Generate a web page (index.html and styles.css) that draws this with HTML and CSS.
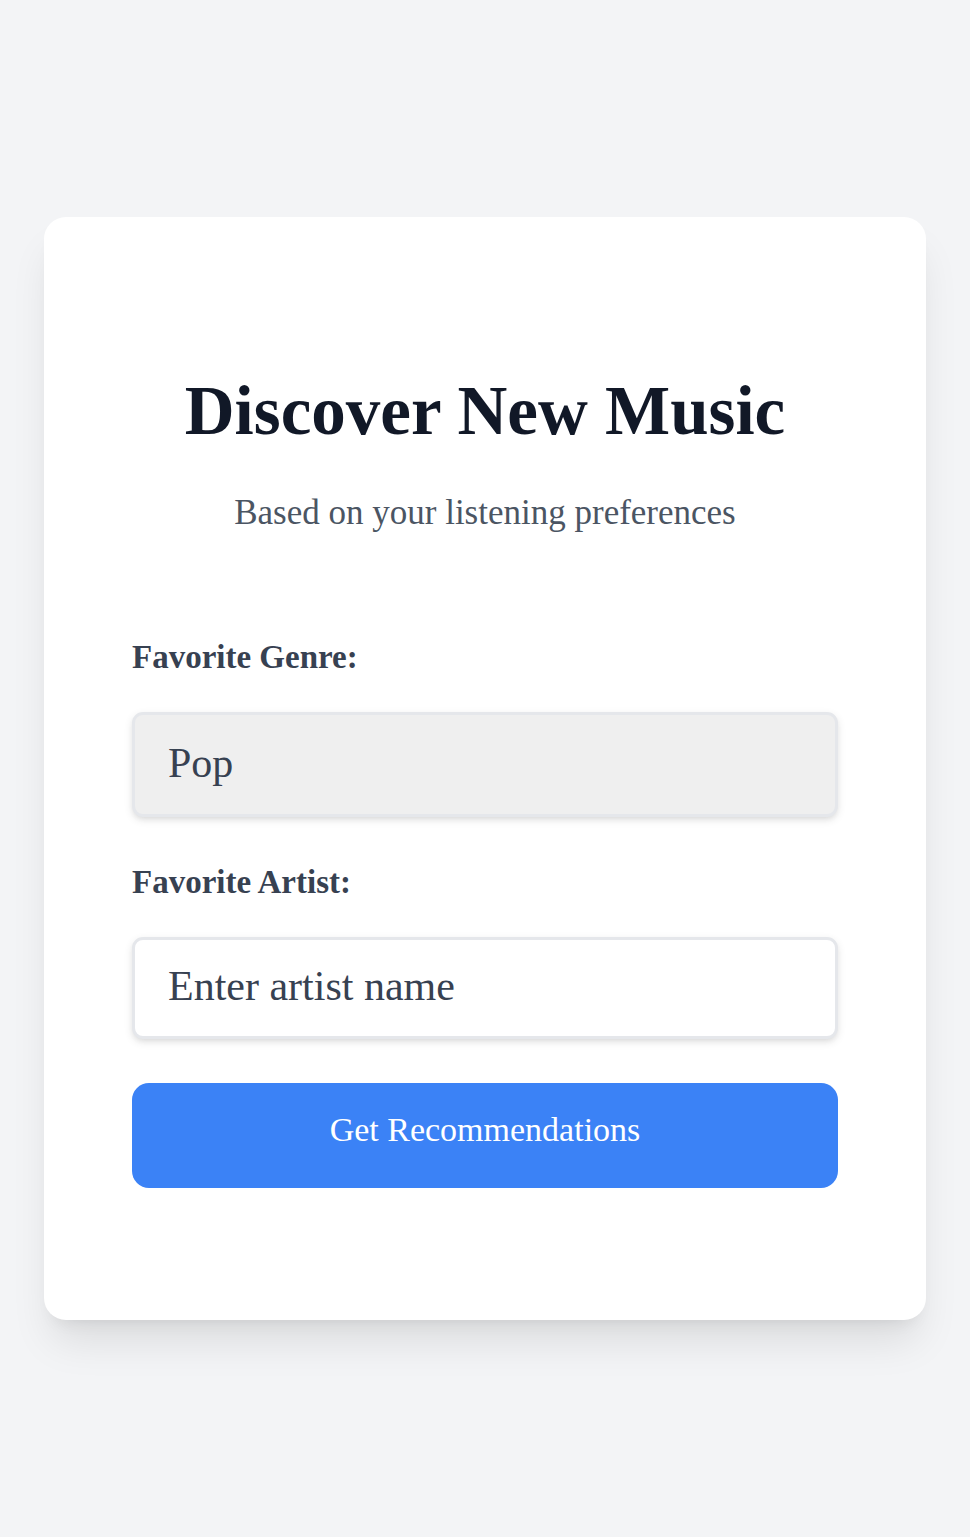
FILE: index.html
```html
<!DOCTYPE html>
<html lang="en">
<head>
<meta charset="utf-8">
<meta name="viewport" content="width=device-width, initial-scale=1">
<title>Discover New Music</title>
<link rel="stylesheet" href="styles.css">
</head>
<body>
<main class="card">
  <header class="intro">
    <h1 class="title">Discover New Music</h1>
    <p class="subtitle">Based on your listening preferences</p>
  </header>
  <form class="form">
    <div class="group">
      <label class="label" for="genre">Favorite Genre:</label>
      <select class="control genre" id="genre">
        <option>Pop</option>
        <option>Rock</option>
        <option>Jazz</option>
      </select>
    </div>
    <div class="group">
      <label class="label" for="artist">Favorite Artist:</label>
      <input class="control artist" id="artist" type="text" placeholder="Enter artist name">
    </div>
    <button class="submit" type="button">Get Recommendations</button>
  </form>
</main>
</body>
</html>
```
FILE: styles.css
```css
* {
  box-sizing: border-box;
}

body {
  margin: 0;
  padding: 44px;
  min-height: 100vh;
  display: flex;
  align-items: center;
  justify-content: center;
  background: #f3f4f6;
  font-family: "Liberation Serif", serif;
  color: #374151;
}

.card {
  width: 100%;
  padding: 132px 88px;
  background: #fff;
  border-radius: 22px;
  box-shadow: 0 28px 41px -8px rgba(0, 0, 0, 0.1), 0 11px 17px -11px rgba(0, 0, 0, 0.1);
}

.intro {
  margin-bottom: 101px;
  text-align: center;
}

.title {
  margin: 0 0 18px;
  font-size: 69px;
  line-height: 124px;
  font-weight: 700;
  color: #111827;
}

.subtitle {
  margin: 0;
  font-size: 35px;
  line-height: 44px;
  color: #4b5563;
}

.form {
  display: flex;
  flex-direction: column;
  gap: 44px;
}

.group {
  display: flex;
  flex-direction: column;
  gap: 34px;
}

.label {
  font-size: 33px;
  line-height: 42px;
  font-weight: 700;
}

.control {
  width: 100%;
  margin: 0;
  padding: 20px 33px 24px;
  border: 3px solid #e5e7eb;
  border-radius: 11px;
  box-shadow: 0 3px 8px rgba(0, 0, 0, 0.1), 0 3px 6px -3px rgba(0, 0, 0, 0.1);
  font-family: inherit;
  font-size: 42px;
  line-height: 52px;
  color: #374151;
  appearance: none;
}

.genre {
  height: 105px;
  background: #efefef;
}

.artist {
  height: 102px;
  background: #fff;
}

.artist::placeholder {
  color: #374151;
  opacity: 1;
}

.submit {
  padding: 22px 44px 33px;
  border: 0;
  border-radius: 17px;
  background: #3b82f6;
  font-family: inherit;
  font-size: 34px;
  line-height: 50px;
  color: #fff;
}
```
